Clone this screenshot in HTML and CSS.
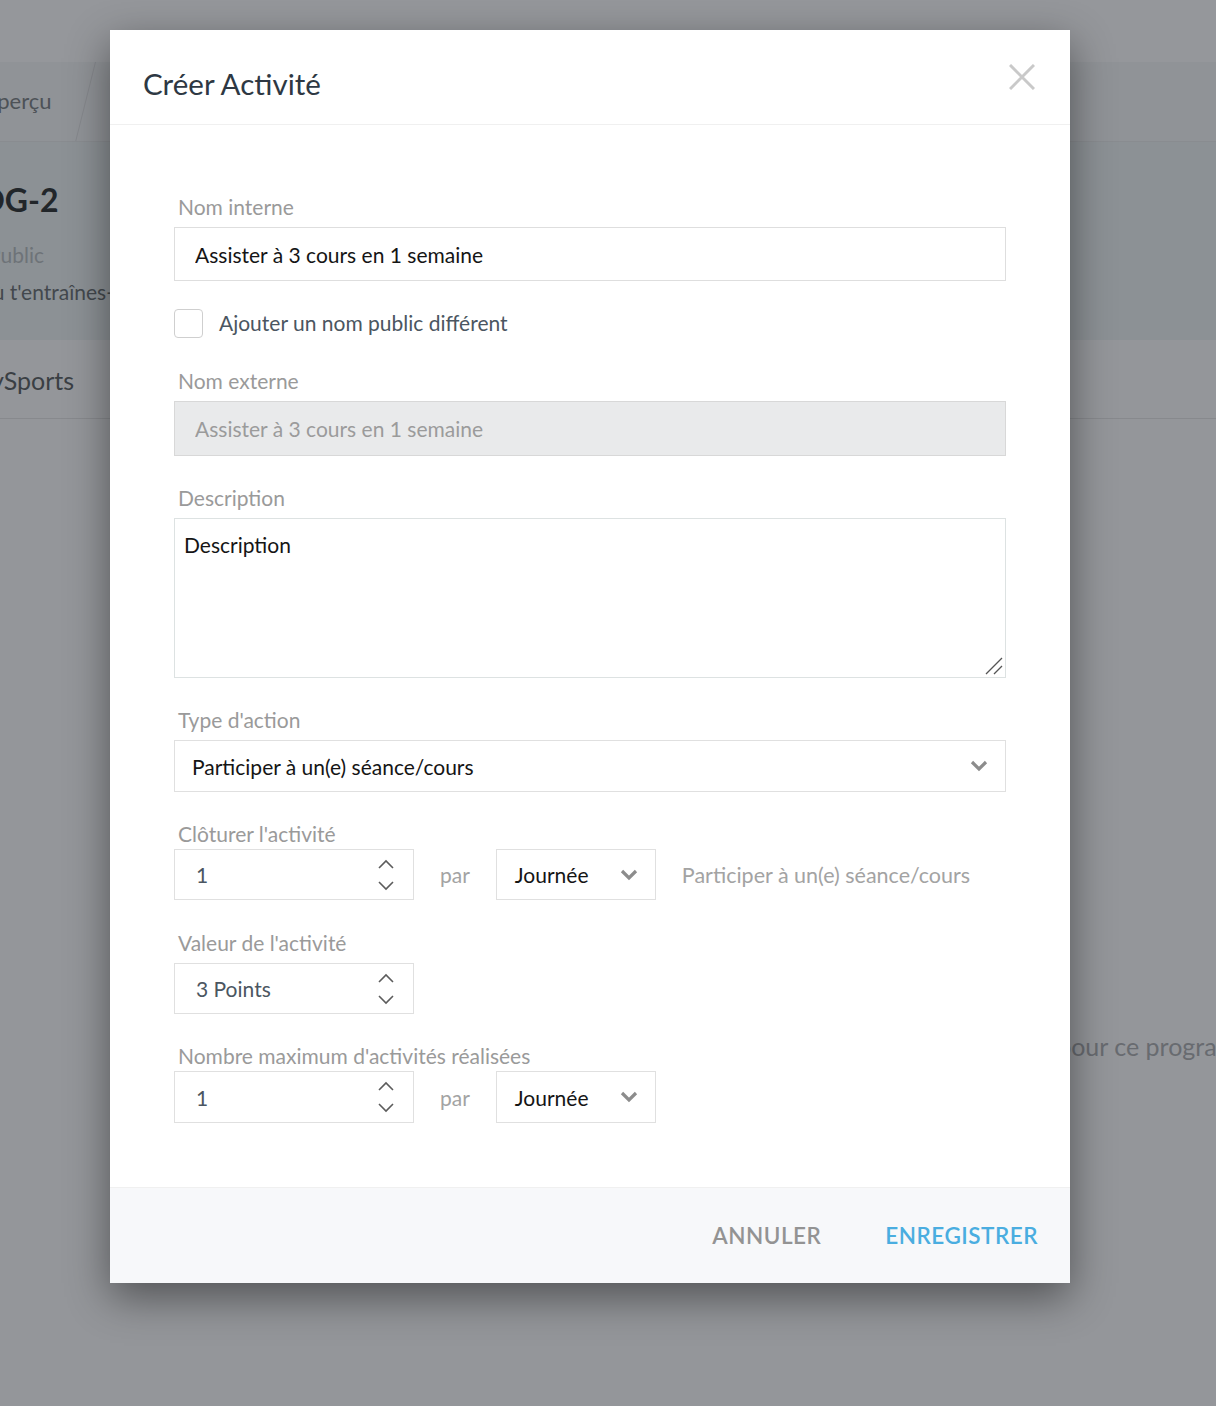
FILE: index.html
```html
<!DOCTYPE html>
<html lang="fr">

<head>
    <title>Créer Activité</title>
    <meta name="viewport" content="width=device-width, initial-scale=1.0" />
    <link rel="stylesheet" href="styles.css">
</head>

<body>
    <div class="page">
        <div class="topbar"></div>
        <div class="tabs">
            <div class="tab"><span>Aperçu</span></div>
        </div>
        <div class="hero">
            <h2 class="hero-title">OG-2</h2>
            <p class="hero-sub">Public</p>
            <p class="hero-text">Où t'entraînes-tu ?</p>
        </div>
        <div class="brand-row">MySports</div>
        <p class="empty">Aucune activité pour ce programme</p>
    </div>

    <div class="modal">
        <div class="modal-header">
            <h1 class="modal-title">Créer Activité</h1>
            <button class="close" aria-label="Fermer">
                <svg width="26" height="26" viewBox="0 0 26 26">
                    <path d="M1 1 L25 25 M25 1 L1 25" stroke="#c9c9c9" stroke-width="3" fill="none" />
                </svg>
            </button>
        </div>

        <div class="modal-body">
            <div class="group group-first">
                <label class="label" for="nom_interne">Nom interne</label>
                <input class="field" id="nom_interne" type="text" value="Assister à 3 cours en 1 semaine" />
            </div>

            <div class="check-row">
                <span class="checkbox"></span>
                <span class="check-label">Ajouter un nom public différent</span>
            </div>

            <div class="group">
                <label class="label" for="nom_externe">Nom externe</label>
                <input class="field field-disabled" id="nom_externe" type="text" value="Assister à 3 cours en 1 semaine" disabled />
            </div>

            <div class="group">
                <label class="label" for="description">Description</label>
                <div class="area-wrap">
                    <textarea class="area" id="description">Description</textarea>
                    <svg class="grip" width="18" height="18" viewBox="0 0 18 18">
                        <path d="M1 17 L17 1 M9 17 L17 9" stroke="#555" stroke-width="1.3" fill="none" />
                    </svg>
                </div>
            </div>

            <div class="group">
                <label class="label" for="type_action">Type d'action</label>
                <div class="select select-wide" id="type_action">
                    <span>Participer à un(e) séance/cours</span>
                    <svg class="chev" width="18" height="12" viewBox="0 0 18 12">
                        <path d="M2 2 L9 9 L16 2" stroke="#8c8c8c" stroke-width="3.2" fill="none" />
                    </svg>
                </div>
            </div>

            <div class="group group-row">
                <label class="label label-close">Clôturer l'activité</label>
                <div class="inline-row">
                    <div class="number">
                        <span>1</span>
                        <span class="spin">
                            <svg width="18" height="34" viewBox="0 0 18 34">
                                <path d="M2 10 L9 3 L16 10 M2 24 L9 31 L16 24" stroke="#5c5c5c" stroke-width="1.6" fill="none" />
                            </svg>
                        </span>
                    </div>
                    <span class="par">par</span>
                    <div class="select select-small">
                        <span>Journée</span>
                        <svg class="chev" width="18" height="12" viewBox="0 0 18 12">
                            <path d="M2 2 L9 9 L16 2" stroke="#8c8c8c" stroke-width="3.2" fill="none" />
                        </svg>
                    </div>
                    <span class="hint">Participer à un(e) séance/cours</span>
                </div>
            </div>

            <div class="group">
                <label class="label">Valeur de l'activité</label>
                <div class="number">
                    <span>3 Points</span>
                    <span class="spin">
                        <svg width="18" height="34" viewBox="0 0 18 34">
                            <path d="M2 10 L9 3 L16 10 M2 24 L9 31 L16 24" stroke="#5c5c5c" stroke-width="1.6" fill="none" />
                        </svg>
                    </span>
                </div>
            </div>

            <div class="group group-last">
                <label class="label label-close">Nombre maximum d'activités réalisées</label>
                <div class="inline-row">
                    <div class="number number-tall">
                        <span>1</span>
                        <span class="spin">
                            <svg width="18" height="34" viewBox="0 0 18 34">
                                <path d="M2 10 L9 3 L16 10 M2 24 L9 31 L16 24" stroke="#5c5c5c" stroke-width="1.6" fill="none" />
                            </svg>
                        </span>
                    </div>
                    <span class="par">par</span>
                    <div class="select select-small select-tall">
                        <span>Journée</span>
                        <svg class="chev" width="18" height="12" viewBox="0 0 18 12">
                            <path d="M2 2 L9 9 L16 2" stroke="#8c8c8c" stroke-width="3.2" fill="none" />
                        </svg>
                    </div>
                </div>
            </div>
        </div>

        <div class="modal-footer">
            <button class="btn btn-cancel">ANNULER</button>
            <button class="btn btn-save">ENREGISTRER</button>
        </div>
    </div>
</body>

</html>
```

FILE: styles.css
```css
html,
body {
    margin: 0;
    padding: 0;
    height: 100%;
    overflow: hidden;
    font-family: "Source Sans Pro", "Lato", sans-serif;
    background-color: #94969a;
}

/* dimmed page behind the dialog */

.page {
    height: 1406px;
    overflow: hidden;
}

.topbar {
    height: 62px;
    background-color: #95979b;
}

.tabs {
    height: 79px;
    background-color: #909397;
    border-bottom: 1px solid #898c90;
    overflow: hidden;
}

.tab {
    width: 85px;
    height: 80px;
    border-right: 1px solid #85888c;
    transform: skewX(-14deg);
    display: flex;
    align-items: center;
}

.tab span {
    transform: skewX(14deg);
    margin: -4px 0 0 -18px;
    font-size: 22px;
    color: #4d5257;
}

.hero {
    height: 198px;
    background-color: #8c9195;
    overflow: hidden;
}

.hero-title {
    margin: 0;
    padding-top: 36px;
    margin-left: -21px;
    font-size: 32px;
    line-height: 44px;
    font-weight: 700;
    color: #22262a;
}

.hero-sub {
    margin: 19px 0 0 -12px;
    font-size: 21px;
    line-height: 28px;
    color: #6e7378;
}

.hero-text {
    margin: 9px 0 0 -24px;
    font-size: 21px;
    line-height: 28px;
    color: #43484d;
    white-space: nowrap;
}

.brand-row {
    height: 78px;
    line-height: 80px;
    margin-left: -32px;
    font-size: 25px;
    color: #3a3f44;
    border-bottom: 1px solid #87898d;
}

.empty {
    margin: 612px 0 0 880px;
    font-size: 25px;
    color: #686b70;
    white-space: nowrap;
}

/* dialog */

.modal {
    position: absolute;
    left: 110px;
    top: 30px;
    width: 960px;
    background-color: #fff;
    box-shadow: 0 14px 40px rgba(0, 0, 0, 0.45);
}

.modal-header {
    height: 95px;
    box-sizing: border-box;
    padding: 0 35px 0 33px;
    border-bottom: 1px solid #f0f0f0;
    display: flex;
    align-items: center;
    justify-content: space-between;
}

.modal-title {
    margin: 12px 0 0 0;
    font-size: 29.5px;
    font-weight: 400;
    color: #2e3843;
}

.close {
    border: none;
    background: none;
    padding: 0;
    margin-top: -1px;
    display: flex;
}

.modal-body {
    padding: 70px 64px 64px 64px;
}

.group {
    margin-bottom: 30px;
}

.group-first {
    margin-bottom: 28px;
}

.group-row {
    margin-bottom: 31px;
}

.group-last {
    margin-bottom: 0;
}

.label {
    display: block;
    margin: 0 0 8px 4px;
    font-size: 21px;
    line-height: 24px;
    color: #9a9a9a;
}

.label-close {
    margin-bottom: 3px;
}

.field {
    display: block;
    width: 100%;
    height: 54px;
    box-sizing: border-box;
    padding: 0 20px;
    border: 1px solid #dedede;
    font-family: inherit;
    font-size: 21px;
    color: #151515;
    background-color: #fff;
    outline: none;
}

.field-disabled {
    height: 55px;
    background-color: #e9eaeb;
    border-color: #d8d8d8;
    color: #9b9b9b;
}

.check-row {
    height: 29px;
    display: flex;
    align-items: center;
    gap: 16px;
    margin: 28px 0 31px 0;
}

.checkbox {
    width: 27px;
    height: 27px;
    border: 1px solid #cfcfcf;
    border-radius: 4px;
}

.check-label {
    margin-top: -1px;
    font-size: 21px;
    line-height: 24px;
    color: #4b5661;
}

.area-wrap {
    position: relative;
}

.area {
    display: block;
    width: 100%;
    height: 160px;
    box-sizing: border-box;
    padding: 13px 9px;
    border: 1px solid #dde2e2;
    font-family: inherit;
    font-size: 21px;
    line-height: 26px;
    color: #151515;
    resize: none;
    outline: none;
}

.grip {
    position: absolute;
    right: 3px;
    bottom: 3px;
}

.select {
    height: 52px;
    box-sizing: border-box;
    border: 1px solid #e0e0e0;
    display: flex;
    align-items: center;
    justify-content: space-between;
    font-size: 21px;
    color: #151515;
}

.select-wide {
    padding: 0 17px 0 17px;
}

.select-small {
    width: 160px;
    height: 51px;
    padding: 0 17px 0 18px;
}

.select-tall {
    height: 52px;
}

.inline-row {
    display: flex;
    align-items: center;
    gap: 26px;
}

.number {
    width: 240px;
    height: 51px;
    box-sizing: border-box;
    padding: 0 18px 0 21px;
    border: 1px solid #e0e0e0;
    display: flex;
    align-items: center;
    justify-content: space-between;
    font-size: 21px;
    color: #4b5661;
}

.number-tall {
    height: 52px;
}

.spin {
    display: flex;
}

.par {
    font-size: 21px;
    color: #a3a3a3;
}

.hint {
    font-size: 21.5px;
    color: #a3a3a3;
}

.modal-footer {
    height: 96px;
    box-sizing: border-box;
    padding: 0 32px;
    background-color: #f7f8fa;
    border-top: 1px solid #f0f0f0;
    display: flex;
    align-items: center;
    justify-content: flex-end;
    gap: 64px;
}

.btn {
    border: none;
    background: none;
    padding: 0;
    font-family: inherit;
    font-size: 22.5px;
    font-weight: 600;
    letter-spacing: 0.5px;
}

.btn-cancel {
    color: #939393;
}

.btn-save {
    color: #4aade0;
}
```
